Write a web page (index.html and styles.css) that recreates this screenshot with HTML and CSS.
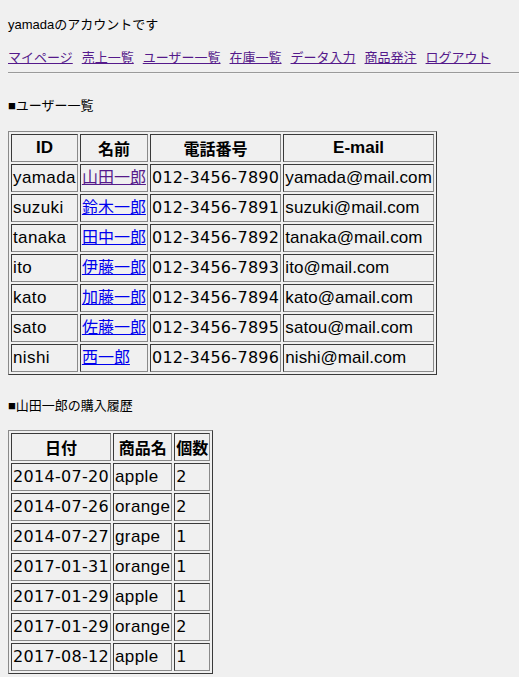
FILE: index.html
```html
<!DOCTYPE html>
<html lang="ja">
<head>
<meta charset="utf-8">
<title>ユーザー一覧</title>
<link rel="stylesheet" href="styles.css">
</head>
<body>
<p class="account">yamadaのアカウントです</p>
<nav class="menu">
  <a class="link visited" href="#">マイページ</a>
  <a class="link visited" href="#">売上一覧</a>
  <a class="link visited" href="#">ユーザー一覧</a>
  <a class="link visited" href="#">在庫一覧</a>
  <a class="link visited" href="#">データ入力</a>
  <a class="link visited" href="#">商品発注</a>
  <a class="link visited" href="#">ログアウト</a>
</nav>
<hr class="rule">
<h2 class="section">■ユーザー一覧</h2>
<table class="grid users">
  <tr><th>ID</th><th class="ja">名前</th><th class="ja">電話番号</th><th>E-mail</th></tr>
  <tr><td>yamada</td><td><a class="link visited ja" href="#">山田一郎</a></td><td class="num">012-3456-7890</td><td class="mail">yamada@mail.com</td></tr>
  <tr><td>suzuki</td><td><a class="link ja" href="#">鈴木一郎</a></td><td class="num">012-3456-7891</td><td class="mail">suzuki@mail.com</td></tr>
  <tr><td>tanaka</td><td><a class="link ja" href="#">田中一郎</a></td><td class="num">012-3456-7892</td><td class="mail">tanaka@mail.com</td></tr>
  <tr><td>ito</td><td><a class="link ja" href="#">伊藤一郎</a></td><td class="num">012-3456-7893</td><td class="mail">ito@mail.com</td></tr>
  <tr><td>kato</td><td><a class="link ja" href="#">加藤一郎</a></td><td class="num">012-3456-7894</td><td class="mail">kato@amail.com</td></tr>
  <tr><td>sato</td><td><a class="link ja" href="#">佐藤一郎</a></td><td class="num">012-3456-7895</td><td class="mail">satou@mail.com</td></tr>
  <tr><td>nishi</td><td><a class="link ja" href="#">西一郎</a></td><td class="num">012-3456-7896</td><td class="mail">nishi@mail.com</td></tr>
</table>
<h2 class="section second">■山田一郎の購入履歴</h2>
<table class="grid history">
  <tr><th class="ja">日付</th><th class="ja">商品名</th><th class="ja">個数</th></tr>
  <tr><td class="num">2014-07-20</td><td>apple</td><td class="num">2</td></tr>
  <tr><td class="num">2014-07-26</td><td>orange</td><td class="num">2</td></tr>
  <tr><td class="num">2014-07-27</td><td>grape</td><td class="num">1</td></tr>
  <tr><td class="num">2017-01-31</td><td>orange</td><td class="num">1</td></tr>
  <tr><td class="num">2017-01-29</td><td>apple</td><td class="num">1</td></tr>
  <tr><td class="num">2017-01-29</td><td>orange</td><td class="num">2</td></tr>
  <tr><td class="num">2017-08-12</td><td>apple</td><td class="num">1</td></tr>
</table>
</body>
</html>
```
FILE: styles.css
```css
html, body {
  background: #f0f0f0;
}
body {
  margin: 0;
  padding: 0 0 0 8px;
  font-family: "Liberation Sans", "Noto Sans CJK JP", sans-serif;
  font-size: 13px;
  color: #000;
}
.account {
  margin: 16px 0 0;
  line-height: 18px;
}
.menu {
  margin-top: 15px;
  display: flex;
  gap: 9px;
  line-height: 18px;
}
.link {
  color: #0000ee;
  text-decoration: underline;
}
.link.visited {
  color: #551a8b;
}
.rule {
  margin: 5px 0 0;
  height: 0;
  border: 0;
  border-top: 1px solid #9a9a9a;
  border-bottom: 1px solid #f4f4f4;
}
.section {
  margin: 23px 0 0;
  font-size: 13px;
  font-weight: normal;
  line-height: 18px;
}
.section.second {
  margin-top: 22px;
}
.grid {
  margin-top: 16px;
  border-collapse: separate;
  border-spacing: 2px;
  border: 1px solid;
  border-color: #8a8a8a #3a3a3a #3a3a3a #8a8a8a;
  font-size: 17px;
  line-height: 24px;
}
.history {
  margin-top: 15px;
}
.grid th,
.grid td {
  height: 24px;
  padding: 1px;
  border: 1px solid;
  border-color: #3a3a3a #8a8a8a #8a8a8a #3a3a3a;
  text-align: left;
  vertical-align: middle;
  white-space: nowrap;
}
.grid td {
  letter-spacing: 0.4px;
}
.grid td.mail {
  letter-spacing: 0.05px;
}
.grid th {
  text-align: center;
  font-weight: bold;
}
.ja {
  font-family: "Noto Sans CJK JP", sans-serif;
  font-size: 16px;
  letter-spacing: 0;
}
.grid a.ja {
  line-height: 16px;
}
.grid th.ja {
  font-size: 16px;
  line-height: 24px;
}
.grid td.num {
  font-family: "DejaVu Sans", sans-serif;
  font-size: 16px;
  letter-spacing: 0.3px;
}
```
